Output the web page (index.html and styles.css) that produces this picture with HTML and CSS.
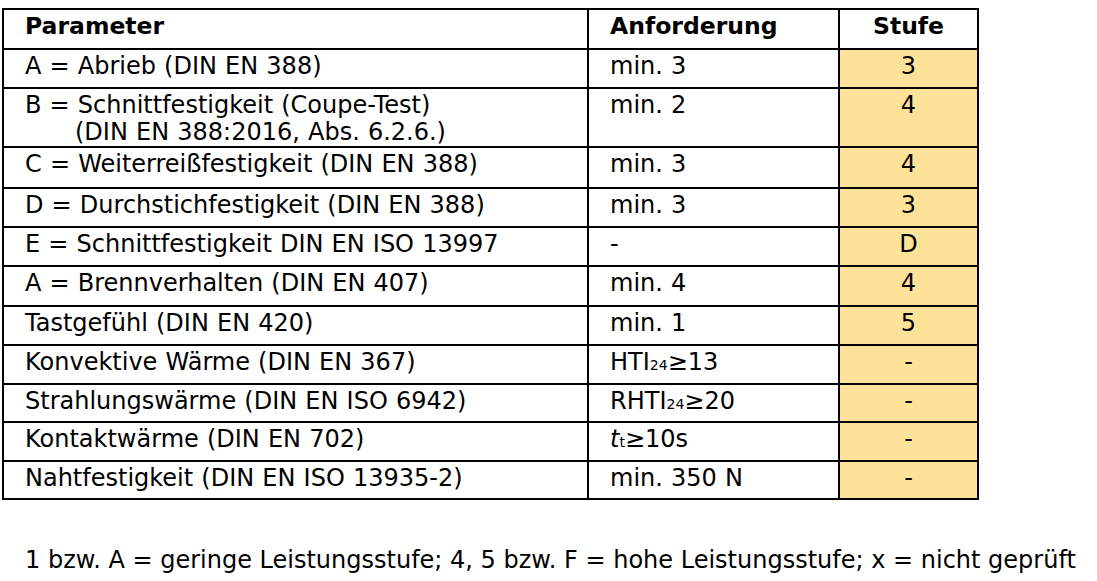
FILE: index.html
```html
<!DOCTYPE html>
<html lang="de">
<head>
<meta charset="utf-8">
<title>Parameter</title>
<link rel="stylesheet" href="styles.css">
</head>
<body>
<table class="spec">
  <tr class="row head">
    <th class="c1">Parameter</th>
    <th class="c2">Anforderung</th>
    <th class="c3">Stufe</th>
  </tr>
  <tr class="row">
    <td class="c1">A = Abrieb (DIN EN 388)</td>
    <td class="c2">min. 3</td>
    <td class="c3 lvl">3</td>
  </tr>
  <tr class="row tall">
    <td class="c1">B = Schnittfestigkeit (Coupe-Test)<span class="indent">(DIN EN 388:2016, Abs. 6.2.6.)</span></td>
    <td class="c2">min. 2</td>
    <td class="c3 lvl">4</td>
  </tr>
  <tr class="row r41">
    <td class="c1">C = Weiterreißfestigkeit (DIN EN 388)</td>
    <td class="c2">min. 3</td>
    <td class="c3 lvl">4</td>
  </tr>
  <tr class="row">
    <td class="c1">D = Durchstichfestigkeit (DIN EN 388)</td>
    <td class="c2">min. 3</td>
    <td class="c3 lvl">3</td>
  </tr>
  <tr class="row">
    <td class="c1">E = Schnittfestigkeit DIN EN ISO 13997</td>
    <td class="c2">-</td>
    <td class="c3 lvl">D</td>
  </tr>
  <tr class="row r40">
    <td class="c1">A = Brennverhalten (DIN EN 407)</td>
    <td class="c2">min. 4</td>
    <td class="c3 lvl">4</td>
  </tr>
  <tr class="row">
    <td class="c1">Tastgefühl (DIN EN 420)</td>
    <td class="c2">min. 1</td>
    <td class="c3 lvl">5</td>
  </tr>
  <tr class="row">
    <td class="c1">Konvektive Wärme (DIN EN 367)</td>
    <td class="c2">HTI<span class="sub">24</span>≥13</td>
    <td class="c3 lvl">-</td>
  </tr>
  <tr class="row r38">
    <td class="c1">Strahlungswärme (DIN EN ISO 6942)</td>
    <td class="c2">RHTI<span class="sub">24</span>≥20</td>
    <td class="c3 lvl">-</td>
  </tr>
  <tr class="row">
    <td class="c1">Kontaktwärme (DIN EN 702)</td>
    <td class="c2"><i>t</i><span class="sub">t</span>≥10s</td>
    <td class="c3 lvl">-</td>
  </tr>
  <tr class="row r38">
    <td class="c1">Nahtfestigkeit (DIN EN ISO 13935-2)</td>
    <td class="c2">min. 350 N</td>
    <td class="c3 lvl">-</td>
  </tr>
</table>
<p class="note">1 bzw. A = geringe Leistungsstufe; 4, 5 bzw. F = hohe Leistungsstufe; x = nicht geprüft</p>
</body>
</html>
```

FILE: styles.css
```css
html, body {
  margin: 0;
  padding: 0;
  background: #ffffff;
}

body {
  font-family: "DejaVu Sans", Verdana, sans-serif;
  font-size: 24px;
  line-height: 27px;
  color: #000000;
}

.spec {
  margin: 8px 0 0 2px;
  border-collapse: separate;
  border-spacing: 0;
  border-top: 2px solid #000;
  border-left: 2px solid #000;
  table-layout: fixed;
}

.spec th,
.spec td {
  box-sizing: border-box;
  border-right: 2px solid #000;
  border-bottom: 2px solid #000;
  vertical-align: top;
  padding: 3px 0 0 0;
  text-align: left;
  white-space: nowrap;
  word-spacing: 0.5px;
}

.spec th {
  font-weight: bold;
  font-size: 23.5px;
  word-spacing: 0;
}

.row { height: 39px; }
.row.head { height: 40px; }
.row.tall { height: 59px; }
.row.r41 { height: 41px; }
.row.r40 { height: 40px; }
.row.r38 { height: 38px; }

.c1 {
  width: 585px;
  padding-left: 21px !important;
}

.c2 {
  width: 251px;
  padding-left: 21px !important;
}

.c3 {
  width: 139px;
  text-align: center !important;
}

.lvl {
  background: #ffe29a;
}

.indent {
  display: block;
  padding-left: 50px;
}

.sub {
  font-size: 14px;
}

.note {
  margin: 47px 0 0 25px;
  font-size: 24px;
}
```
